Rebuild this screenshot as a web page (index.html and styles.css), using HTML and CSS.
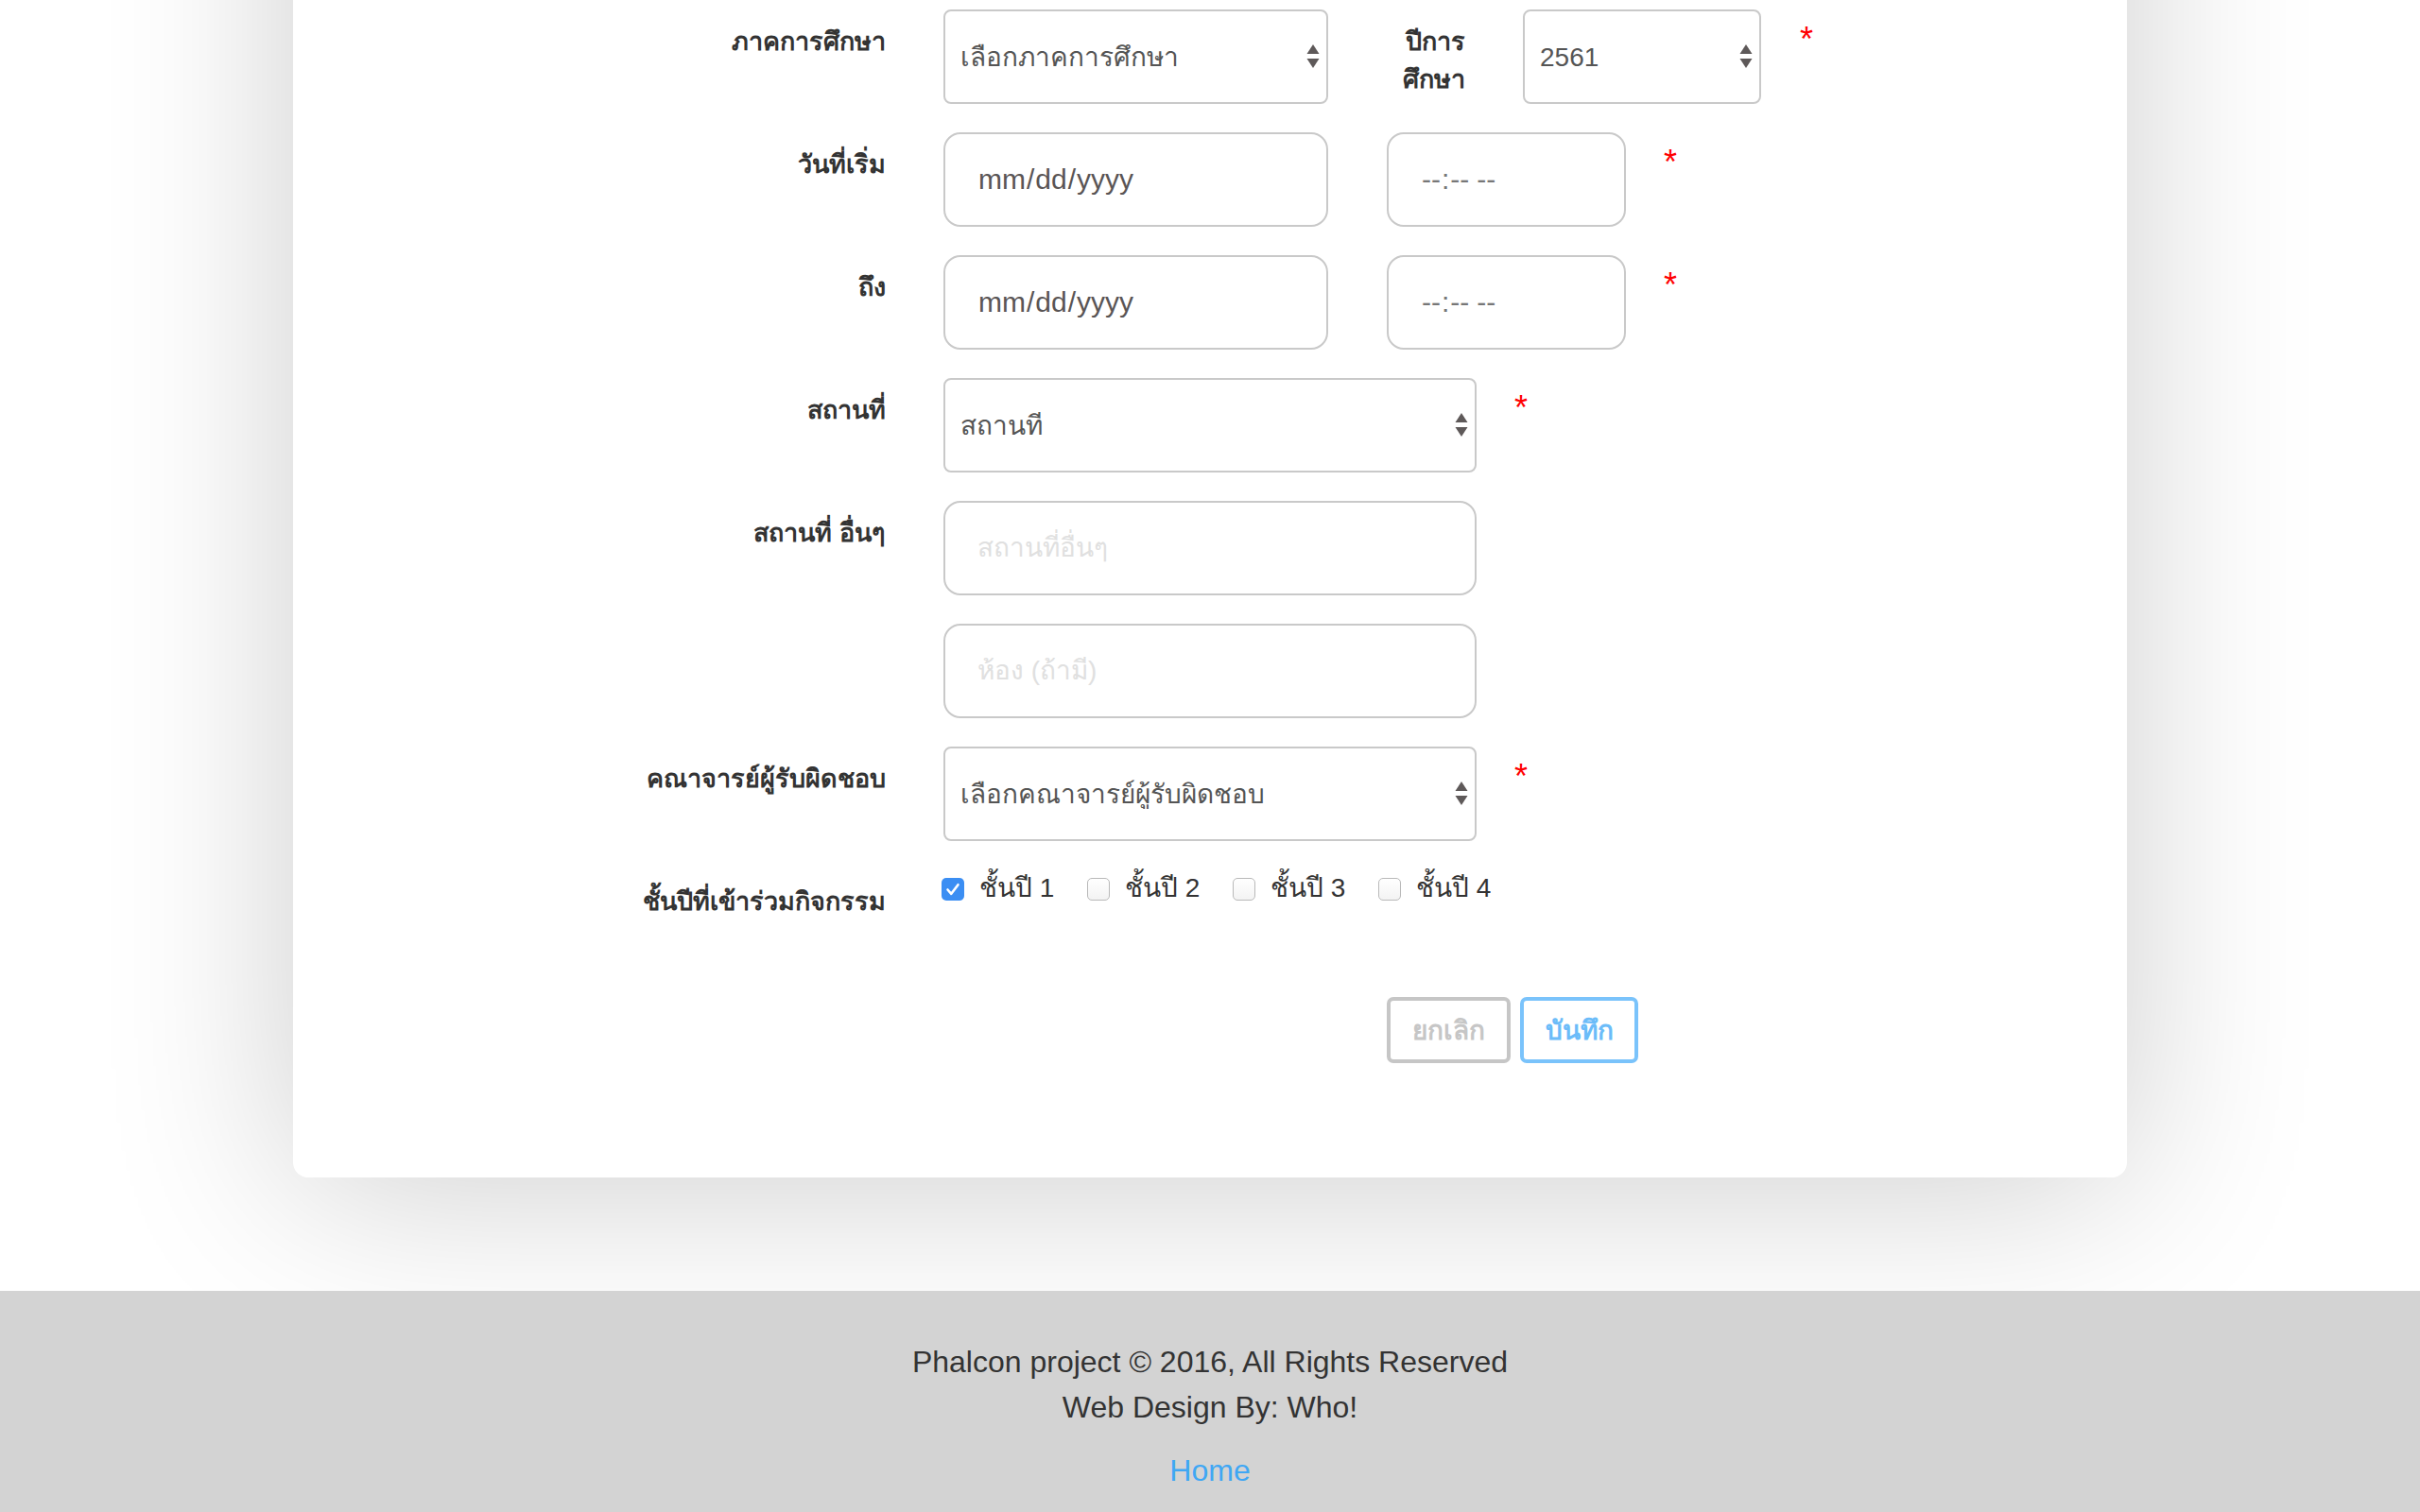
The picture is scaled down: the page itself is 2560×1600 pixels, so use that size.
FILE: index.html
```html
<!DOCTYPE html>
<html lang="th">
<head>
<meta charset="utf-8">
<title>Form</title>
<link rel="stylesheet" href="styles.css">
</head>
<body>
<main class="page">
  <section class="card">
    <form class="form">
      <div class="row">
        <label class="lbl">ภาคการศึกษา</label>
        <div class="sel-wrap w-md">
          <select class="field sel"><option>เลือกภาคการศึกษา</option></select>
          <svg class="arrows" viewBox="0 0 14 26"><polygon points="7,0 13.5,10 0.5,10"/><polygon points="0.5,15 13.5,15 7,25"/></svg>
        </div>
        <label class="lbl-year">ปีการ<br>ศึกษา</label>
        <div class="sel-wrap w-sm">
          <select class="field sel"><option>2561</option></select>
          <svg class="arrows" viewBox="0 0 14 26"><polygon points="7,0 13.5,10 0.5,10"/><polygon points="0.5,15 13.5,15 7,25"/></svg>
        </div>
        <span class="req">*</span>
      </div>

      <div class="row">
        <label class="lbl">วันที่เริ่ม</label>
        <input class="field inp dt w-md" type="date">
        <input class="field inp dt tm" type="time">
        <span class="req">*</span>
      </div>

      <div class="row">
        <label class="lbl">ถึง</label>
        <input class="field inp dt w-md" type="date">
        <input class="field inp dt tm" type="time">
        <span class="req">*</span>
      </div>

      <div class="row">
        <label class="lbl">สถานที่</label>
        <div class="sel-wrap w-lg">
          <select class="field sel"><option>สถานที่</option></select>
          <svg class="arrows" viewBox="0 0 14 26"><polygon points="7,0 13.5,10 0.5,10"/><polygon points="0.5,15 13.5,15 7,25"/></svg>
        </div>
        <span class="req">*</span>
      </div>

      <div class="row">
        <label class="lbl">สถานที่ อื่นๆ</label>
        <input class="field inp w-lg" type="text" placeholder="สถานที่อื่นๆ">
      </div>

      <div class="row">
        <span class="lbl"></span>
        <input class="field inp w-lg" type="text" placeholder="ห้อง (ถ้ามี)">
      </div>

      <div class="row">
        <label class="lbl">คณาจารย์ผู้รับผิดชอบ</label>
        <div class="sel-wrap w-lg">
          <select class="field sel"><option>เลือกคณาจารย์ผู้รับผิดชอบ</option></select>
          <svg class="arrows" viewBox="0 0 14 26"><polygon points="7,0 13.5,10 0.5,10"/><polygon points="0.5,15 13.5,15 7,25"/></svg>
        </div>
        <span class="req">*</span>
      </div>

      <div class="row row-checks">
        <label class="lbl">ชั้นปีที่เข้าร่วมกิจกรรม</label>
        <div class="checks">
          <label class="check">
            <span class="cb cb-on"><svg viewBox="0 0 24 24"><path d="M6.5 12.5 L10.3 16.8 L17.5 7.2" fill="none" stroke="#fff" stroke-width="2.6" stroke-linecap="round" stroke-linejoin="round"/></svg></span>
            <span class="cb-text">ชั้นปี 1</span>
          </label>
          <label class="check">
            <span class="cb"></span>
            <span class="cb-text">ชั้นปี 2</span>
          </label>
          <label class="check">
            <span class="cb"></span>
            <span class="cb-text">ชั้นปี 3</span>
          </label>
          <label class="check">
            <span class="cb"></span>
            <span class="cb-text">ชั้นปี 4</span>
          </label>
        </div>
      </div>

      <div class="actions">
        <button type="button" class="btn btn-cancel">ยกเลิก</button>
        <button type="button" class="btn btn-save">บันทึก</button>
      </div>
    </form>
  </section>

  <footer class="footer">
    <p>Phalcon project © 2016, All Rights Reserved</p>
    <p>Web Design By: Who!</p>
    <p class="home"><a href="#">Home</a></p>
  </footer>
</main>
</body>
</html>
```

FILE: styles.css
```css
* { box-sizing: border-box; }

html, body {
  margin: 0;
  padding: 0;
  background: #ffffff;
}

body {
  font-family: "Liberation Sans", "Noto Sans", sans-serif;
  color: #333333;
  overflow: hidden;
}

.page {
  min-height: 1600px;
}

.card {
  width: 1940px;
  margin: -300px auto 120px;
  padding: 310px 0 121px 227px;
  background: #ffffff;
  border-radius: 16px;
  box-shadow: 0 10px 200px rgba(0, 0, 0, 0.2);
}

.row {
  display: flex;
  align-items: flex-start;
  margin-bottom: 30px;
}

.lbl {
  flex: none;
  width: 400px;
  margin-right: 61px;
  padding-top: 14px;
  text-align: right;
  font-weight: bold;
  font-size: 27px;
  line-height: 40px;
  color: #333333;
}

.lbl-year {
  flex: none;
  width: 96px;
  margin-left: 49px;
  margin-right: 61px;
  padding-top: 14px;
  text-align: right;
  font-weight: bold;
  font-size: 27px;
  line-height: 40px;
  color: #333333;
}

.field {
  display: block;
  height: 100px;
  border: 2px solid #c9c9c9;
  background: #ffffff;
  color: #555555;
  font-family: "Liberation Sans", "Noto Sans", sans-serif;
  font-size: 28px;
  outline: none;
  margin: 0;
}

.sel-wrap {
  position: relative;
  flex: none;
}

.w-md { width: 407px; }
.w-sm { width: 252px; }
.w-lg { width: 564px; }

.sel {
  width: 100%;
  appearance: none;
  -webkit-appearance: none;
  border-radius: 8px;
  padding: 0 40px 0 16px;
}

.arrows {
  position: absolute;
  right: 9px;
  top: 37px;
  width: 14px;
  height: 26px;
  fill: #5e5959;
  pointer-events: none;
}

.inp {
  flex: none;
  border-radius: 18px;
  padding: 0 34px;
}

.inp::placeholder {
  color: #e0e0e0;
}

.dt {
  font-size: 30px;
  color: #5a5555;
}

.tm {
  width: 253px;
  margin-left: 62px;
  color: #777;
  letter-spacing: 1px;
}

.dt::-webkit-calendar-picker-indicator {
  display: none;
}

.req {
  flex: none;
  margin-left: 40px;
  padding-top: 12px;
  color: #ff0000;
  font-size: 36px;
  line-height: 40px;
}

.w-sm + .req { margin-left: 41px; }

.row-checks {
  margin-bottom: 81px;
}

.checks {
  display: grid;
  grid-template-columns: repeat(4, 154px);
  margin-left: -2px;
}

.check {
  display: flex;
  align-items: flex-start;
}

.cb {
  flex: none;
  width: 24px;
  height: 24px;
  margin-top: 9px;
  margin-right: 16px;
  border: 1.5px solid #b9b9b9;
  border-radius: 5px;
  background: linear-gradient(#ffffff, #f3f3f3);
}

.cb svg {
  display: block;
  width: 100%;
  height: 100%;
}

.cb-on {
  border: none;
  background: #3b8ef3;
}

.cb-text {
  margin-top: 5px;
  font-size: 28px;
  line-height: 30px;
  color: #333333;
}

.actions {
  display: flex;
  gap: 10px;
  margin-left: 930px;
}

.btn {
  height: 70px;
  padding: 0;
  border: 4px solid;
  border-radius: 7px;
  background: #ffffff;
  font-family: "Liberation Sans", "Noto Sans", sans-serif;
  font-weight: bold;
  font-size: 28px;
  cursor: pointer;
}

.btn-cancel {
  width: 131px;
  border-color: #c6c6c6;
  color: #c6c6c6;
}

.btn-save {
  width: 125px;
  border-color: #7ac3fb;
  color: #6bbcf9;
}

.footer {
  background: #d3d3d3;
  padding: 51px 0 20px;
  text-align: center;
  font-size: 32px;
  line-height: 48px;
  color: #333333;
  min-height: 234px;
}

.footer p {
  margin: 0;
}

.footer .home {
  margin-top: 19px;
}

.footer a {
  color: #3fa7f4;
  text-decoration: none;
}
```
